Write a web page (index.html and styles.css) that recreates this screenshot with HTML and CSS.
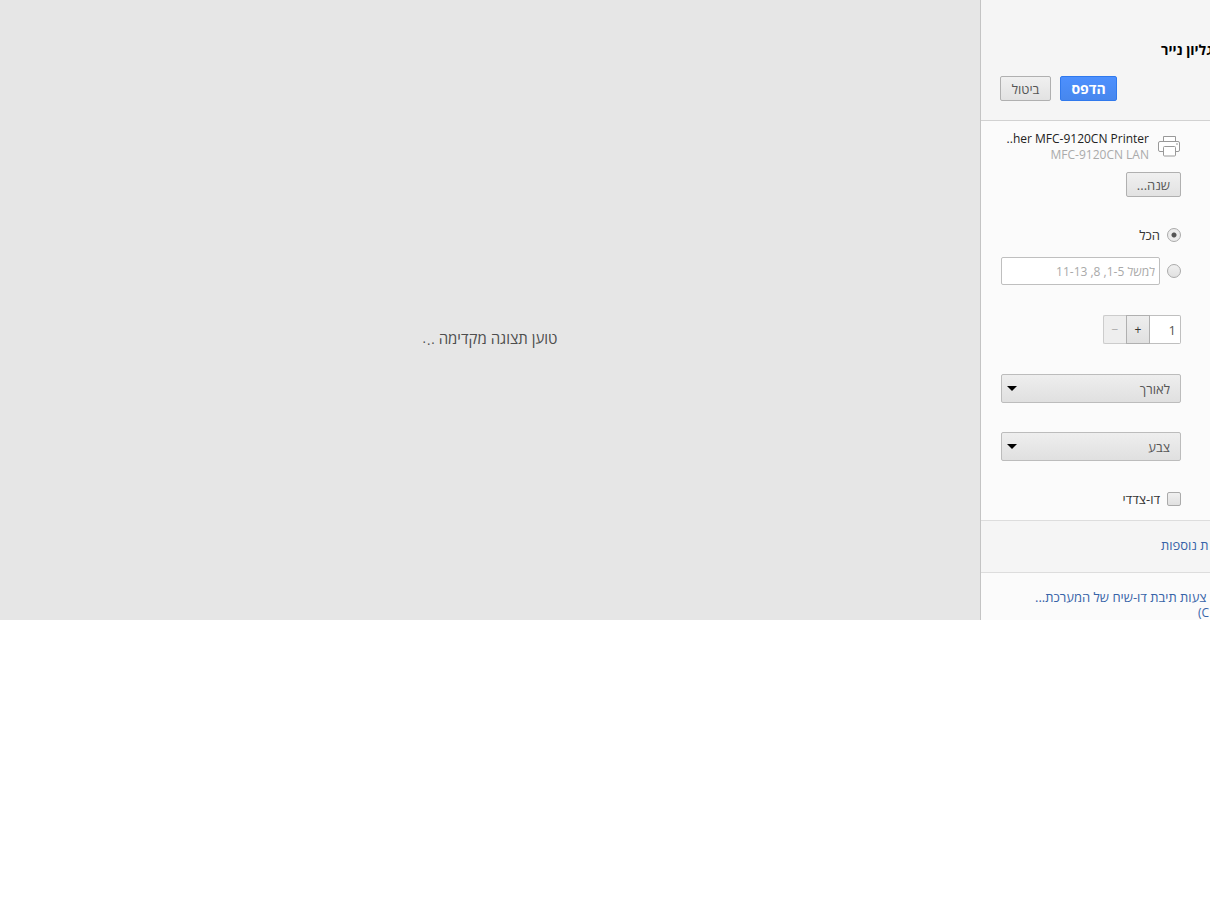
FILE: index.html
```html
<!DOCTYPE html>
<html lang="he">
<head>
<meta charset="utf-8">
<title>הדפס</title>
<link rel="stylesheet" href="styles.css">
</head>
<body>
<div class="dialog">
  <main class="preview"><p class="loading" dir="rtl">טוען תצוגה מקדימה <span class="dots"><i>.</i><i class="low">.</i><i class="high">.</i></span></p></main>
  <aside class="sidebar">
    <header class="header">
      <h1 class="title" dir="rtl">גליון נייר</h1>
      <div class="actions">
        <button class="btn" type="button">ביטול</button>
        <button class="btn primary" type="button">הדפס</button>
      </div>
    </header>
    <form class="settings">
      <div class="destination">
        <div class="printer">
          <span class="name">..her MFC-9120CN Printer</span>
          <span class="place">MFC-9120CN LAN</span>
        </div>
        <svg class="icon" viewBox="0 0 24 22" fill="#fff" stroke="#999">
          <path d="M6.500 7V1.500H18.500V7"/>
          <rect x="1.500" y="6.500" width="21" height="10" rx="1.500"/>
          <rect x="6.500" y="11.500" width="12" height="9.500" rx="1"/>
          <path d="M19 9h2"/>
        </svg>
      </div>
      <button class="btn change" type="button" dir="rtl">שנה...</button>
      <div class="row all" dir="rtl">
        <input class="radio" type="radio" name="pages" id="all" checked>
        <label for="all">הכל</label>
      </div>
      <div class="row range" dir="rtl">
        <input class="radio" type="radio" name="pages" id="some" aria-label="עמודים">
        <input class="field" type="text" placeholder="למשל 1-5, 8, 11-13" aria-label="טווח עמודים">
      </div>
      <div class="copies" dir="rtl">
        <input class="count" type="text" value="1" aria-label="עותקים">
        <button class="step" type="button">+</button>
        <button class="step" type="button" disabled>−</button>
      </div>
      <select class="select" dir="rtl" aria-label="פריסה"><option>לאורך</option></select>
      <select class="select" dir="rtl" aria-label="צבע"><option>צבע</option></select>
      <div class="row duplex" dir="rtl">
        <input class="check" type="checkbox" id="duplex">
        <label for="duplex">דו-צדדי</label>
      </div>
    </form>
    <div class="more"><a href="#" dir="rtl">ת נוספות</a></div>
    <div class="system">
      <a href="#" dir="rtl">צעות תיבת דו-שיח של המערכת...</a>
      <a class="shortcut" href="#">(C</a>
    </div>
  </aside>
</div>
</body>
</html>
```
FILE: styles.css
```css
* { box-sizing: border-box; }
body { margin: 0; background: #fff; overflow-x: hidden; }
body, button, input, select {
  font-family: "Open Sans", "Noto Sans", sans-serif;
  font-size: 13px;
  line-height: 16px;
}
.dialog { display: flex; height: 620px; overflow: hidden; }
.preview {
  flex: 1;
  display: flex;
  justify-content: center;
  background: #e6e6e6;
  color: #4d4d4d;
}
.loading { margin: 328px 0 0; font-size: 15px; line-height: 20px; }
.dots { display: inline-flex; gap: 1px; font-size: 13px; }
.dots i { font-style: normal; }
.dots .low { padding-top: 1px; }
.dots .high { margin-top: -1px; }
.sidebar {
  width: 230px;
  border-left: 1px solid #c4c4c4;
  background: #fbfbfb;
  overflow: hidden;
  white-space: nowrap;
}
.header {
  height: 121px;
  padding: 40px 0 0 19px;
  background: #f5f5f5;
  border-bottom: 1px solid #d2d2d2;
}
.title { width: max-content; margin: 0 0 16px 161px; font-size: 14px; line-height: 20px; }
.actions { display: flex; gap: 9px; }
.btn {
  height: 25px;
  min-width: 51px;
  padding: 0 10px;
  border: 1px solid #b0b0b0;
  border-radius: 2px;
  background: linear-gradient(#f0f0f0, #e2e2e2);
  color: #555;
}
.primary {
  min-width: 57px;
  border-color: #3079ed;
  background: linear-gradient(#4d90fe, #4787ed);
  color: #fff;
  font-size: 14px;
  font-weight: bold;
}
.settings {
  display: flex;
  flex-direction: column;
  align-items: flex-end;
  padding: 10px 29px 13px 20px;
}
.destination { display: flex; gap: 8px; align-items: flex-start; font-size: 12px; }
.printer { display: flex; flex-direction: column; align-items: flex-end; }
.name { color: #222; }
.place { color: #aaa; }
.icon { width: 24px; height: 22px; margin-top: 4px; }
.change { min-width: 53px; margin-top: 9px; }
.row { display: flex; align-items: center; gap: 7px; color: #333; }
.all { margin-top: 30px; }
.range { width: 100%; margin-top: 14px; }
.radio, .check {
  appearance: none;
  flex: none;
  width: 14px;
  height: 14px;
  margin: 0;
  border: 1px solid #aaa;
  background: linear-gradient(#f0f0f0, #e0e0e0);
}
.radio { border-radius: 50%; }
.radio:checked { background: radial-gradient(circle, #555 2px, #ececec 3px); }
.check { border-radius: 2px; }
.field, .count {
  height: 28px;
  padding: 0 4px;
  border: 1px solid #bfbfbf;
  border-radius: 2px;
  background: #fff;
  color: #555;
}
.field { flex: 1; min-width: 0; font-size: 12px; }
.field::placeholder { color: #a9a9a9; opacity: 1; }
.copies { display: flex; margin-top: 30px; }
.copies > * { height: 29px; }
.count { width: 31px; border-radius: 0 2px 2px 0; border-left: 0; }
.step {
  width: 24px;
  padding: 0;
  border: 1px solid #b0b0b0;
  background: linear-gradient(#eee, #e0e0e0);
  color: #333;
  font-size: 12px;
}
.step:disabled { width: 23px; border-color: #ccc; border-right: 0; border-radius: 2px 0 0 2px; background: #eee; color: #aaa; }
.select {
  appearance: none;
  width: 100%;
  height: 29px;
  margin-top: 30px;
  padding: 0 10px;
  border: 1px solid #bcbcbc;
  border-radius: 2px;
  background: url("data:image/svg+xml,%3Csvg xmlns='http://www.w3.org/2000/svg' width='10' height='5'%3E%3Cpath d='M0 0h10L5 5z'/%3E%3C/svg%3E") 5px 50% no-repeat, linear-gradient(#eee, #e0e0e0);
  color: #555;
}
.select + .select { margin-top: 29px; }
.duplex { margin-top: 30px; }
a { color: #3763a8; text-decoration: none; }
.more {
  padding: 16px 0 19px 180px;
  background: #f5f5f5;
  border: solid #ddd;
  border-width: 1px 0;
}
.more a, .system a { display: block; width: max-content; }
.system { padding: 16px 0 0 54px; }
.system .shortcut { margin-left: 163px; font-size: 12px; }
```
